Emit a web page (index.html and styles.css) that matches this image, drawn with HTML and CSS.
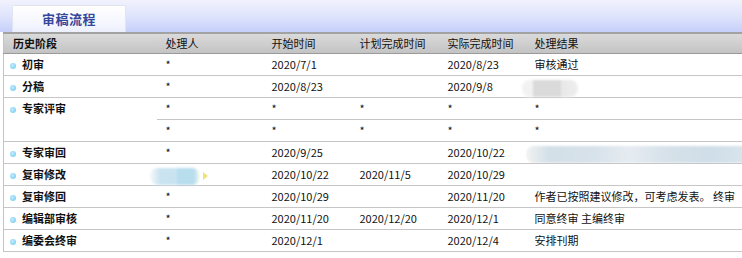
FILE: index.html
```html
<!DOCTYPE html>
<html lang="zh">
<head>
<meta charset="utf-8">
<link rel="stylesheet" href="styles.css">
</head>
<body>
<div class="tabbar">
  <div class="tab">审稿流程</div>
</div>
<table class="flow">
  <colgroup>
    <col class="c1"><col class="c2"><col class="c3"><col class="c4"><col class="c5"><col class="c6">
  </colgroup>
  <thead>
    <tr>
      <th class="first">历史阶段</th><th>处理人</th><th>开始时间</th><th>计划完成时间</th><th>实际完成时间</th><th>处理结果</th>
    </tr>
  </thead>
  <tbody>
    <tr>
      <td class="stage"><span class="dot"></span>初审</td><td>*</td><td>2020/7/1</td><td></td><td>2020/8/23</td><td>审核通过</td>
    </tr>
    <tr>
      <td class="stage"><span class="dot"></span>分稿</td><td>*</td><td>2020/8/23</td><td></td><td>2020/9/8</td><td><span class="blur blur-gray"></span></td>
    </tr>
    <tr class="split">
      <td class="stage top" rowspan="2"><span class="dot"></span>专家评审</td><td>*</td><td>*</td><td>*</td><td>*</td><td>*</td>
    </tr>
    <tr>
      <td>*</td><td>*</td><td>*</td><td>*</td><td>*</td>
    </tr>
    <tr>
      <td class="stage"><span class="dot"></span>专家审回</td><td>*</td><td>2020/9/25</td><td></td><td>2020/10/22</td><td class="clip"><span class="blur blur-wide"></span></td>
    </tr>
    <tr>
      <td class="stage"><span class="dot"></span>复审修改</td><td><span class="blur blur-blue"></span><span class="tri"></span></td><td>2020/10/22</td><td>2020/11/5</td><td>2020/10/29</td><td></td>
    </tr>
    <tr>
      <td class="stage"><span class="dot"></span>复审修回</td><td>*</td><td>2020/10/29</td><td></td><td>2020/11/20</td><td>作者已按照建议修改，可考虑发表。 终审</td>
    </tr>
    <tr>
      <td class="stage"><span class="dot"></span>编辑部审核</td><td>*</td><td>2020/11/20</td><td>2020/12/20</td><td>2020/12/1</td><td>同意终审 主编终审</td>
    </tr>
    <tr>
      <td class="stage"><span class="dot"></span>编委会终审</td><td>*</td><td>2020/12/1</td><td></td><td>2020/12/4</td><td>安排刊期</td>
    </tr>
  </tbody>
</table>
</body>
</html>
```
FILE: styles.css
```css
html, body {
  margin: 0;
  padding: 0;
  background: #ffffff;
}
body {
  font-family: "Noto Sans CJK SC", "Microsoft YaHei", sans-serif;
  font-size: 11px;
  color: #111;
  overflow: hidden;
}
.tabbar {
  height: 32px;
  background: linear-gradient(to bottom, #f1f2fc 0%, #dfe4fc 50%, #c6cffa 100%);
  display: flex;
  align-items: flex-end;
  padding-left: 12px;
  box-sizing: border-box;
}
.tab {
  width: 114px;
  height: 27px;
  box-sizing: border-box;
  border: 1px solid #e2e4ee;
  border-bottom: none;
  border-radius: 2px 2px 0 0;
  background: linear-gradient(to bottom, #ffffff 0%, #f6f7fe 60%, #eceffd 100%);
  color: #35479a;
  font-weight: bold;
  font-size: 13px;
  text-align: center;
  line-height: 25px;
  letter-spacing: 0.5px;
}
.flow {
  margin-left: 3px;
  width: 739px;
  border-collapse: collapse;
  table-layout: fixed;
  border-left: 1px solid #c4c4c4;
}
.c1 { width: 153px; }
.c2 { width: 106px; }
.c3 { width: 88px; }
.c4 { width: 88px; }
.c5 { width: 87px; }
.c6 { width: auto; }
thead th {
  height: 19px;
  padding: 0 0 0 9px;
  text-align: left;
  font-weight: normal;
  background: linear-gradient(to bottom, #dadada 0%, #cfcfcf 50%, #c3c3c3 100%);
  border-top: 2px solid #a2a2a2;
  border-bottom: 1px solid #9a9a9a;
  line-height: 19px;
  white-space: nowrap;
}
thead th.first {
  font-weight: bold;
}
tbody td {
  height: 21px;
  padding: 0 0 0 9px;
  line-height: 21px;
  border-bottom: 1px solid #c6c6c6;
  white-space: nowrap;
  vertical-align: middle;
}
tbody td.stage {
  padding-left: 6px;
  font-weight: bold;
}
tbody td.top {
  vertical-align: top;
}
td.clip {
  overflow: hidden;
}
.dot {
  display: inline-block;
  width: 6px;
  height: 6px;
  border-radius: 50%;
  background: radial-gradient(circle at 40% 40%, #c6ecfc 0%, #8dd4f4 60%, #74c6ee 100%);
  margin-right: 6px;
  vertical-align: 0;
}
.blur {
  display: inline-block;
  vertical-align: middle;
  border-radius: 8px;
  filter: blur(1px);
}
.blur-gray {
  width: 56px;
  height: 17px;
  margin-left: -13px;
  background: linear-gradient(to right, #f2f2f2 0%, #f2f2f2 20%, #dadada 20%, #dadada 70%, #e8e8e8 70%, #eeeeee 100%);
}
.blur-wide {
  width: 230px;
  height: 17px;
  margin-left: -9px;
  background: linear-gradient(to right, #f2f2f2 0%, #d3e0e8 10%, #d8e2ea 30%, #e6ecf1 45%, #d7e2ea 60%, #cfdee8 80%, #dde6ee 100%);
}
.blur-blue {
  width: 50px;
  height: 17px;
  margin-left: -16px;
  background: linear-gradient(to right, #f6f8fc 0%, #c9e4f0 20%, #c9e4f0 55%, #b8dded 55%, #b8dded 88%, #f8fbf0 100%);
}
.tri {
  display: inline-block;
  vertical-align: middle;
  width: 0;
  height: 0;
  margin-left: 3px;
  border-top: 4px solid transparent;
  border-bottom: 4px solid transparent;
  border-left: 5px solid #f1e27a;
}
```
